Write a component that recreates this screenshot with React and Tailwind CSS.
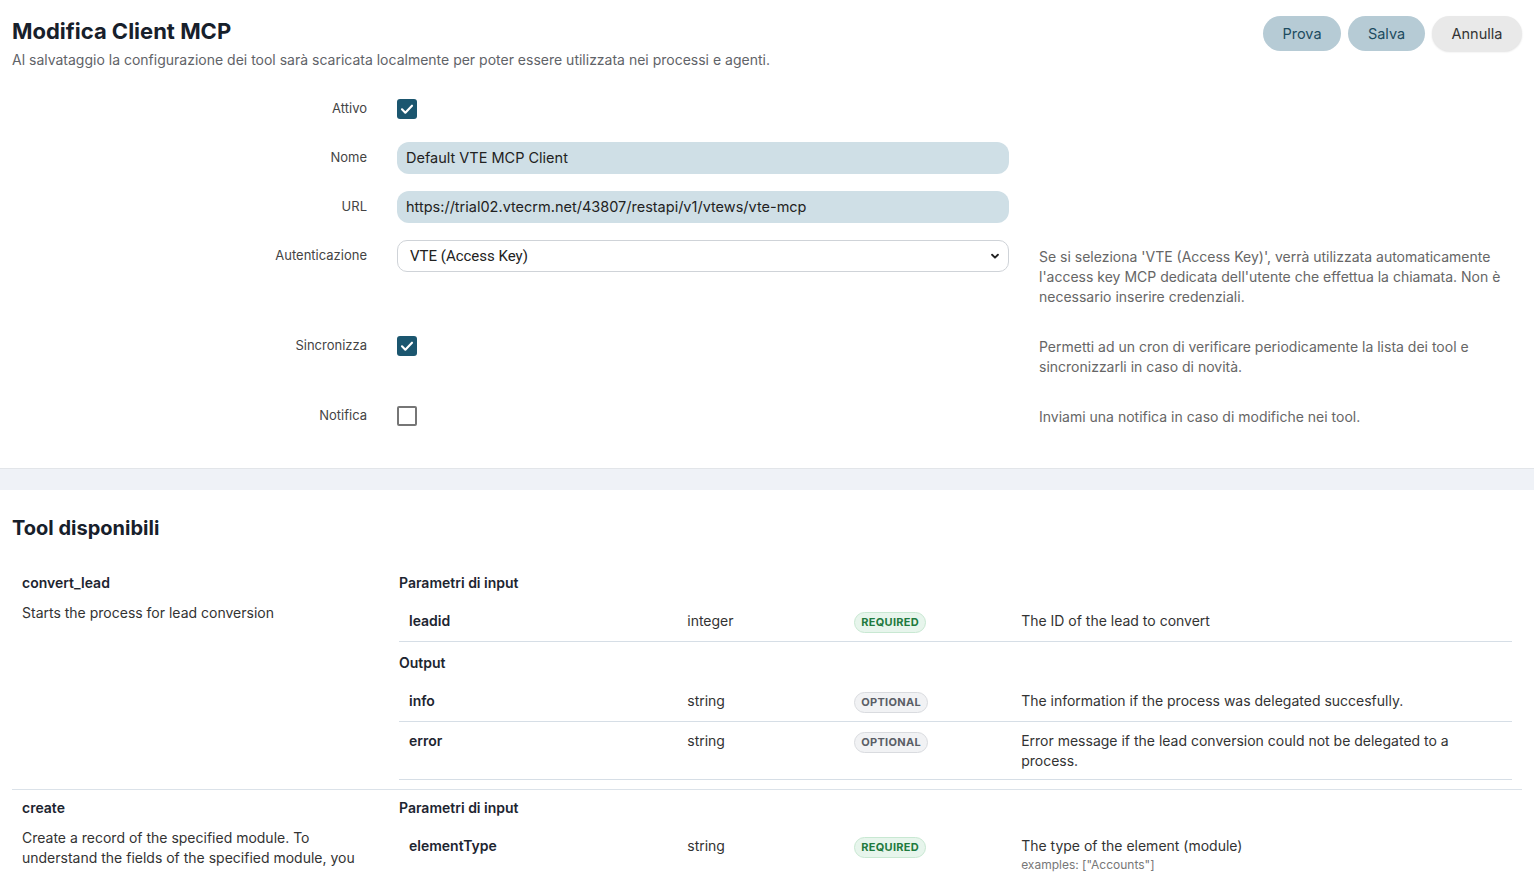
import React from "react";

const Check = () => (
  <svg width="16" height="16" viewBox="0 0 24 24" fill="none" stroke="white" strokeWidth="3.2" strokeLinecap="round" strokeLinejoin="round">
    <path d="M4.5 12.5l5 5L19.5 7" />
  </svg>
);

function Checkbox({ checked }) {
  return checked ? (
    <div className="w-5 h-5 rounded-[3px] bg-[#1b566f] flex items-center justify-center">
      <Check />
    </div>
  ) : (
    <div className="w-5 h-5 rounded-[2px] border-2 border-[#767676] bg-white" />
  );
}

function Row({ label, children, help }) {
  return (
    <div className="flex items-start">
      <div className="w-[367px] h-8 flex items-center justify-end text-[13px] text-[#444]">{label}</div>
      <div className="ml-[30px] w-[612px] min-h-8 flex items-center">{children}</div>
      {help ? (
        <div className="ml-[30px] flex-1 pr-4 pt-[7px] pb-[6px] text-[14px] leading-5 text-[#666]">{help}</div>
      ) : null}
    </div>
  );
}

function Badge({ req }) {
  return req ? (
    <span className="inline-flex items-center h-[21px] px-[6px] rounded-full border border-[#c8e8d2] bg-[#e7f5ec] text-[11px] font-bold tracking-[0.3px] text-[#1f7a3e]">
      REQUIRED
    </span>
  ) : (
    <span className="inline-flex items-center h-[21px] px-[6px] rounded-full border border-[#d9dbdf] bg-[#f1f2f4] text-[11px] font-bold tracking-[0.3px] text-[#5a5e66]">
      OPTIONAL
    </span>
  );
}

function ParamRow({ name, type, req, desc, extra }) {
  const multi = desc.length > 70;
  return (
    <div className="grid grid-cols-[25%_15%_15%_45%] border-b border-[#d6dee6] pt-[9px] pb-[8px] text-[14px] leading-5 text-[#333]">
      <div className={(multi ? "pt-0" : "pt-[2px]") + " px-[10px] font-semibold text-[#1d2530]"}>{name}</div>
      <div className={(multi ? "pt-0" : "pt-[2px]") + " px-[10px]"}>{type}</div>
      <div className={(multi ? "pt-0" : "pt-[2px]") + " px-[10px]"}><Badge req={req} /></div>
      <div className="px-[10px] pr-[40px]">
        <div className="min-h-6 flex flex-col justify-center">{desc}</div>
        {extra ? <div className="text-[12px] text-[#777] leading-4 -mt-[1px]">{extra}</div> : null}
      </div>
    </div>
  );
}

function SectionHead({ children, pt = "pt-[8px]" }) {
  return <div className={pt + " pb-[7px] text-[14px] leading-5 font-semibold text-[#1d2530]"}>{children}</div>;
}

function Tool({ name, desc, input, output }) {
  return (
    <div className="grid grid-cols-[387px_1fr] border-b border-[#dbe2e9] pb-[9px]">
      <div className="px-[10px] pt-[8px]">
        <div className="text-[14px] leading-5 font-semibold text-[#1d2530]">{name}</div>
        <div className="mt-[10px] text-[14px] leading-5 text-[#333] pr-[8px]">{desc}</div>
      </div>
      <div className="pr-[10px]">
        <SectionHead>Parametri di input</SectionHead>
        {input.map((p, i) => (
          <ParamRow key={i} {...p} />
        ))}
        {output ? (
          <>
            <SectionHead pt="pt-[11px]">Output</SectionHead>
            {output.map((p, i) => (
              <ParamRow key={i} {...p} />
            ))}
          </>
        ) : null}
      </div>
    </div>
  );
}

export default function App() {
  return (
    <div className="min-h-screen bg-white text-[#222]" style={{ fontFamily: "Inter, 'Noto Sans', sans-serif" }}>
      <div className="border-b border-[#e2e5e9] shadow-[0_1px_2px_rgba(0,0,0,0.04)] pb-[35px]">
        <div className="flex items-start justify-between px-3 pt-[17px]">
          <div>
            <h1 className="text-[22px] leading-7 font-bold text-[#17202b]">Modifica Client MCP</h1>
            <p className="mt-[5px] text-[14px] leading-5 text-[#5f6368]">
              Al salvataggio la configurazione dei tool sarà scaricata localmente per poter essere utilizzata nei processi e agenti.
            </p>
          </div>
          <div className="flex gap-[7px] -mt-[1px]">
            <button className="h-[35px] w-[78px] rounded-full bg-[#b6cbd5] text-[14.5px] text-[#1d4b60]">Prova</button>
            <button className="h-[35px] w-[77px] rounded-full bg-[#b6cbd5] text-[14.5px] text-[#1d4b60]">Salva</button>
            <button className="h-[35px] w-[90px] rounded-full bg-[#e9e9e9] text-[14.5px] text-[#333] shadow-[0_1px_2px_rgba(0,0,0,0.12)]">Annulla</button>
          </div>
        </div>

        <div className="mt-[23px] flex flex-col gap-[17px]">
          <Row label="Attivo">
            <Checkbox checked />
          </Row>
          <Row label="Nome">
            <div className="w-full h-8 rounded-[12px] bg-[#cfdfe6] px-[9px] flex items-center text-[14.5px] text-[#222]">Default VTE MCP Client</div>
          </Row>
          <Row label="URL">
            <div className="w-full h-8 rounded-[12px] bg-[#cfdfe6] px-[9px] flex items-center text-[14.5px] text-[#222]">https://trial02.vtecrm.net/43807/restapi/v1/vtews/vte-mcp</div>
          </Row>
          <Row
            label="Autenticazione"
            help="Se si seleziona 'VTE (Access Key)', verrà utilizzata automaticamente l'access key MCP dedicata dell'utente che effettua la chiamata. Non è necessario inserire credenziali."
          >
            <div className="w-full h-8 rounded-[10px] border border-[#cfd3d8] bg-white pl-3 pr-2 flex items-center justify-between">
              <span className="text-[15px] text-[#222]" style={{ fontFamily: "Roboto, 'Liberation Sans', sans-serif" }}>VTE (Access Key)</span>
              <svg width="10" height="10" viewBox="0 0 24 24" fill="none" stroke="#222" strokeWidth="4.5" strokeLinecap="round" strokeLinejoin="round">
                <path d="M5 9l7 7 7-7" />
              </svg>
            </div>
          </Row>
          <Row label="Sincronizza" help="Permetti ad un cron di verificare periodicamente la lista dei tool e sincronizzarli in caso di novità.">
            <Checkbox checked />
          </Row>
          <Row label="Notifica" help="Inviami una notifica in caso di modifiche nei tool.">
            <Checkbox />
          </Row>
        </div>
      </div>

      <div className="h-[21px] bg-[#eff2f7]" />

      <div className="px-3 pt-[24px]">
        <h2 className="text-[20px] leading-7 font-bold text-[#17202b]">Tool disponibili</h2>
        <div className="mt-[23px]">
          <Tool
            name="convert_lead"
            desc="Starts the process for lead conversion"
            input={[{ name: "leadid", type: "integer", req: true, desc: "The ID of the lead to convert" }]}
            output={[
              { name: "info", type: "string", req: false, desc: "The information if the process was delegated succesfully." },
              { name: "error", type: "string", req: false, desc: "Error message if the lead conversion could not be delegated to a process." },
            ]}
          />
          <Tool
            name="create"
            desc="Create a record of the specified module. To understand the fields of the specified module, you should use describe tool before calling this tool and ask the user for the values."
            input={[
              { name: "elementType", type: "string", req: true, desc: "The type of the element (module)", extra: 'examples: ["Accounts"]' },
              { name: "element", type: "object", req: true, desc: "The fields of the record to create" },
            ]}
          />
        </div>
      </div>
    </div>
  );
}
